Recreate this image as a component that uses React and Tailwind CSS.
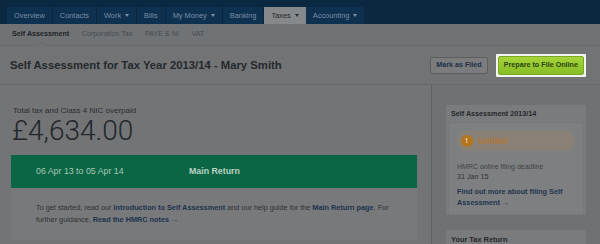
import React from "react";

function Caret({ dark }) {
  return (
    <span
      className={
        dark
          ? "ml-[4px] inline-block w-0 h-0 border-l-[2.5px] border-r-[2.5px] border-t-[3px] border-l-transparent border-r-transparent border-t-[#2a2f34]"
          : "ml-[4px] inline-block w-0 h-0 border-l-[2.5px] border-r-[2.5px] border-t-[3px] border-l-transparent border-r-transparent border-t-[#7d90a3]"
      }
    />
  );
}

const tabs = [
  { label: "Overview" },
  { label: "Contacts" },
  { label: "Work", caret: true },
  { label: "Bills" },
  { label: "My Money", caret: true },
  { label: "Banking" },
  { label: "Taxes", caret: true, active: true },
  { label: "Accounting", caret: true },
];

export default function App() {
  return (
    <div className="w-[600px] h-[244px] overflow-hidden flex flex-col bg-[#727476] font-['Liberation_Sans',Arial,sans-serif]">
      {/* Top nav */}
      <div className="h-[24px] shrink-0 bg-[#0b2841] flex items-end pl-[7px]">
        {tabs.map((t) =>
          t.active ? (
            <div
              key={t.label}
              className="h-[17px] px-[7px] flex items-center bg-[#86898b] text-[#22272b] text-[7.4px]"
            >
              {t.label}
              <Caret dark />
            </div>
          ) : (
            <div
              key={t.label}
              className="h-[17px] px-[7px] flex items-center bg-[#0e3150] border-r border-[#0a263e] text-[#7b8fa3] text-[7.4px]"
            >
              {t.label}
              {t.caret && <Caret />}
            </div>
          )
        )}
      </div>

      {/* Sub nav */}
      <div className="relative h-[22px] shrink-0 bg-[#707376] border-b border-[#66696c] flex items-center pl-[12px] gap-[12.5px] text-[7.2px]">
        <span className="font-bold text-[#1f2326]">Self Assessment</span>
        <span className="text-[#454b50]">Corporation Tax</span>
        <span className="text-[#454b50]">PAYE &amp; NI</span>
        <span className="text-[#454b50]">VAT</span>
        <svg className="absolute left-[37px] bottom-[-1px]" width="9" height="5" viewBox="0 0 9 5">
          <path d="M0 5 L4.5 0.5 L9 5 Z" fill="#717375" />
          <path d="M0 5 L4.5 0.5 L9 5" fill="none" stroke="#66696c" strokeWidth="1" />
        </svg>
      </div>

      {/* Title bar */}
      <div className="h-[39px] shrink-0 bg-[#717375] border-b border-[#656769] flex items-center justify-between pl-[10px] pr-[14px]">
        <h1 className="text-[11.3px] font-bold text-[#25292c]">
          Self Assessment for Tax Year 2013/14 - Mary Smith
        </h1>
        <div className="flex items-center gap-[8px]">
          <div className="h-[17px] px-[5px] flex items-center rounded-[2px] bg-[#7a7c7e] border border-[#5c5e60] text-[7.2px] font-bold text-[#1e3148]">
            Mark as Filed
          </div>
          <div className="p-[2px] bg-[#f4f5f2] rounded-[1px]">
            <div className="h-[19px] px-[5px] flex items-center rounded-[2px] bg-gradient-to-b from-[#a6d43a] to-[#86bd26] border border-[#7aaa22] text-[7.2px] font-bold text-[#2b4410]">
              Prepare to File Online
            </div>
          </div>
        </div>
      </div>

      {/* Body */}
      <div className="flex flex-1 min-h-0">
        {/* Main */}
        <div className="w-[432px] shrink-0 border-r border-[#5f6163] pl-[11px] pr-[14px] pt-[21px]">
          <div className="pl-[2px] text-[8px] leading-[10px] text-[#2a2e32]">
            Total tax and Class 4 NIC overpaid
          </div>
          <div className="mt-[1px] pl-[1px] text-[28px] leading-[28px] font-light font-['Roboto',sans-serif] text-[#23272b]">
            £4,634.00
          </div>
          <div className="mt-[10px] h-[33px] bg-[#0b6645] flex items-center pl-[25px] text-[8.8px]">
            <span className="w-[153px] text-[#a9c6b7]">06 Apr 13 to 05 Apr 14</span>
            <span className="font-bold text-[#bdd2c7]">Main Return</span>
          </div>
          <div className="h-[52px] bg-[#77797b] pl-[25px] pt-[14px] text-[7.3px] leading-[12px] text-[#2e3236]">
            To get started, read our{" "}
            <span className="font-bold text-[#1d3350]">Introduction to Self Assessment</span> and our
            help guide for the <span className="font-bold text-[#1d3350]">Main Return page</span>. For
            <br />
            further guidance,{" "}
            <span className="font-bold text-[#1d3350]">Read the HMRC notes →</span>
          </div>
        </div>

        {/* Sidebar */}
        <div className="flex-1 bg-[#6f7173] pl-[14px] pr-[14px] pt-[20px]">
          <div className="bg-[#7a7b7d] rounded-[2px] pb-[1px] px-[3px]">
            <div className="h-[18px] flex items-center pl-[2px] text-[7.2px] font-bold text-[#25292c]">
              Self Assessment 2013/14
            </div>
            <div className="bg-[#7e7f80] rounded-[1px] shadow-[0_0_1px_rgba(0,0,0,0.25)] px-[8px] pt-[8px] pb-[5.5px]">
              <div className="h-[20px] rounded-full bg-[#8a8176] flex items-center pl-[3.5px]">
                <div className="w-[12px] h-[12px] rounded-full bg-[#b4761c] flex items-center justify-center text-[#ecd9b6] text-[8px] font-bold leading-none">
                  !
                </div>
                <span className="ml-[6px] text-[8.6px] font-bold text-[#b0773a]">Unfiled</span>
              </div>
              <div className="mt-[11px] text-[7px] leading-[10px] text-[#3e4347]">
                HMRC online filing deadline
              </div>
              <div className="text-[7.2px] leading-[10px] text-[#2f3337]">31 Jan 15</div>
              <div className="mt-[5px] text-[7.3px] leading-[10.5px] font-bold text-[#1e3450]">
                Find out more about filing Self
                <br />
                Assessment →
              </div>
            </div>
          </div>
          <div className="mt-[15px] h-[20px] bg-[#7a7b7d] rounded-[2px] pl-[5px] pt-[4px] text-[7.4px] font-bold text-[#25292c]">
            Your Tax Return
          </div>
        </div>
      </div>
    </div>
  );
}
